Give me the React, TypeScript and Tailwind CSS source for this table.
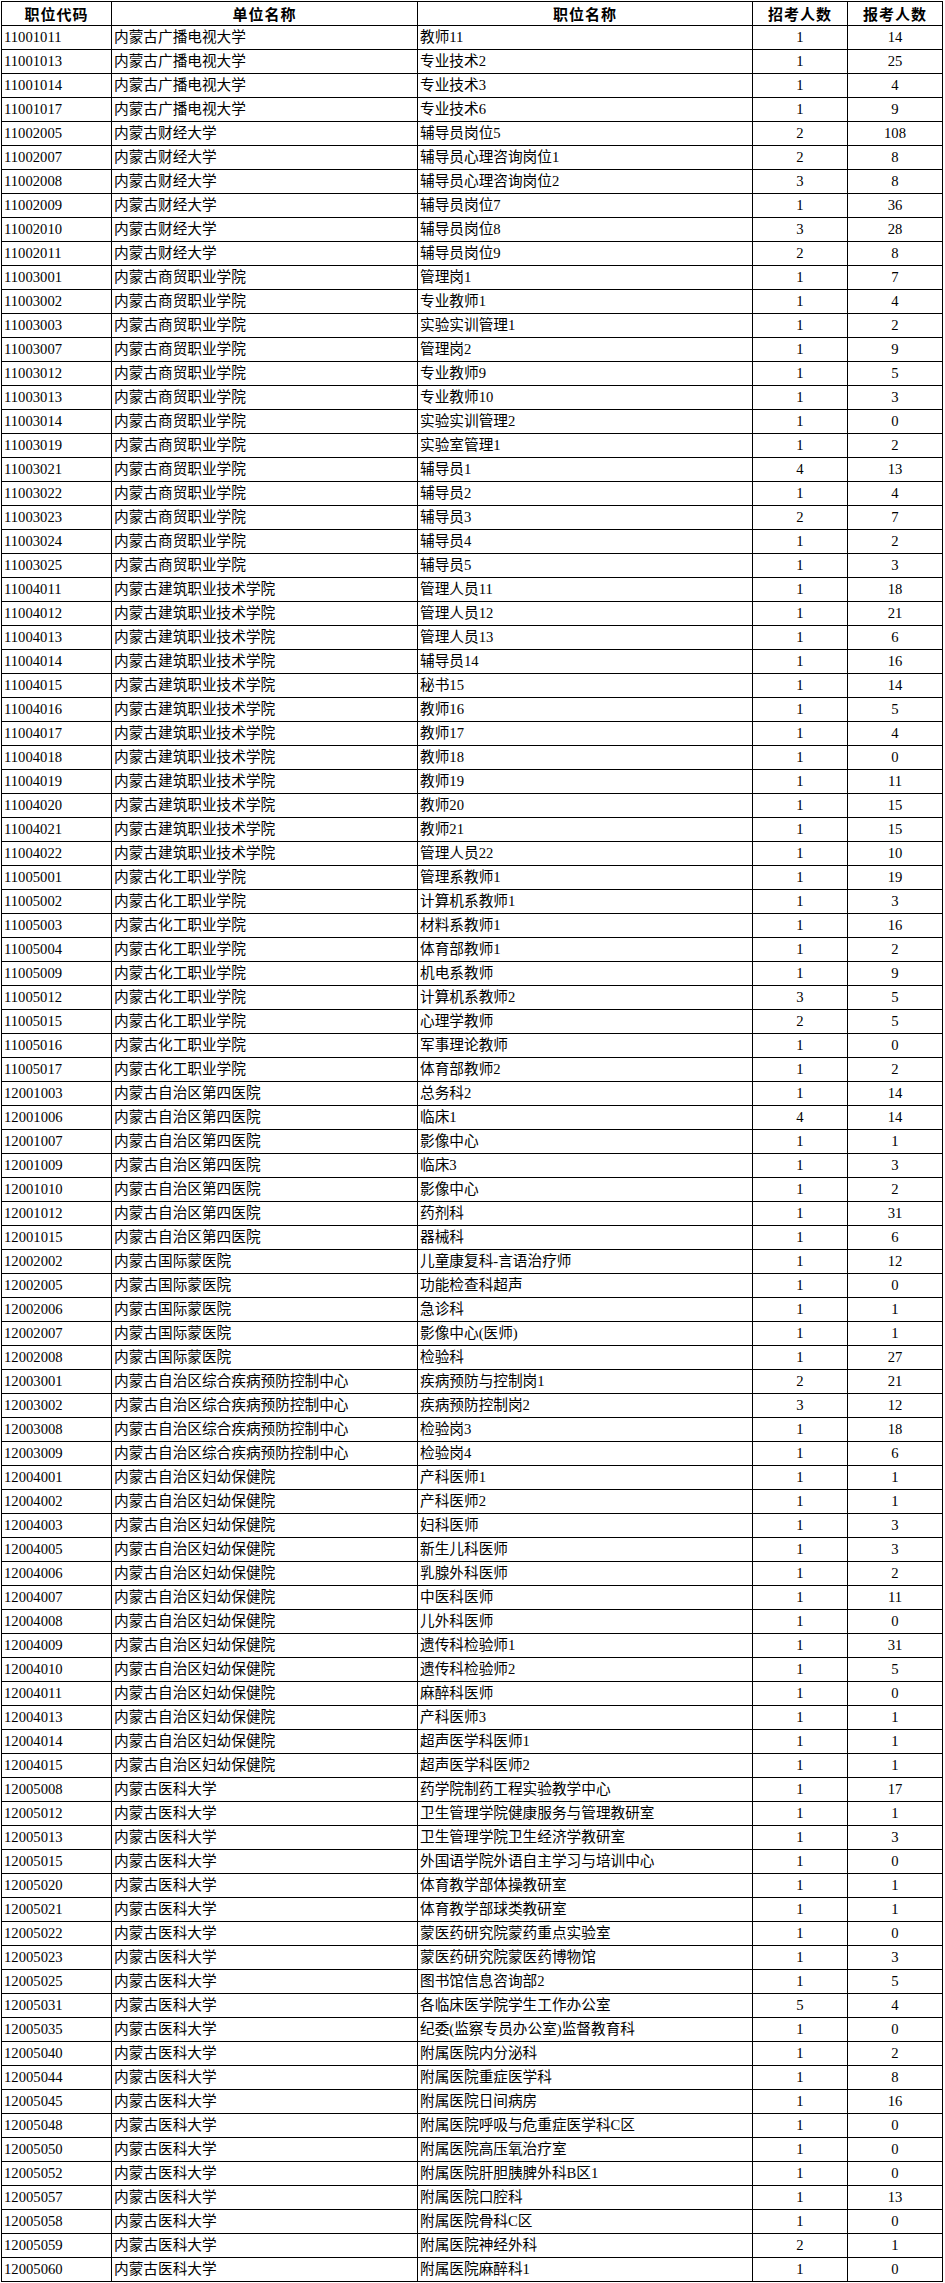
import React from "react";

const raw = `11001011|内蒙古广播电视大学|教师11|1|14
11001013|内蒙古广播电视大学|专业技术2|1|25
11001014|内蒙古广播电视大学|专业技术3|1|4
11001017|内蒙古广播电视大学|专业技术6|1|9
11002005|内蒙古财经大学|辅导员岗位5|2|108
11002007|内蒙古财经大学|辅导员心理咨询岗位1|2|8
11002008|内蒙古财经大学|辅导员心理咨询岗位2|3|8
11002009|内蒙古财经大学|辅导员岗位7|1|36
11002010|内蒙古财经大学|辅导员岗位8|3|28
11002011|内蒙古财经大学|辅导员岗位9|2|8
11003001|内蒙古商贸职业学院|管理岗1|1|7
11003002|内蒙古商贸职业学院|专业教师1|1|4
11003003|内蒙古商贸职业学院|实验实训管理1|1|2
11003007|内蒙古商贸职业学院|管理岗2|1|9
11003012|内蒙古商贸职业学院|专业教师9|1|5
11003013|内蒙古商贸职业学院|专业教师10|1|3
11003014|内蒙古商贸职业学院|实验实训管理2|1|0
11003019|内蒙古商贸职业学院|实验室管理1|1|2
11003021|内蒙古商贸职业学院|辅导员1|4|13
11003022|内蒙古商贸职业学院|辅导员2|1|4
11003023|内蒙古商贸职业学院|辅导员3|2|7
11003024|内蒙古商贸职业学院|辅导员4|1|2
11003025|内蒙古商贸职业学院|辅导员5|1|3
11004011|内蒙古建筑职业技术学院|管理人员11|1|18
11004012|内蒙古建筑职业技术学院|管理人员12|1|21
11004013|内蒙古建筑职业技术学院|管理人员13|1|6
11004014|内蒙古建筑职业技术学院|辅导员14|1|16
11004015|内蒙古建筑职业技术学院|秘书15|1|14
11004016|内蒙古建筑职业技术学院|教师16|1|5
11004017|内蒙古建筑职业技术学院|教师17|1|4
11004018|内蒙古建筑职业技术学院|教师18|1|0
11004019|内蒙古建筑职业技术学院|教师19|1|11
11004020|内蒙古建筑职业技术学院|教师20|1|15
11004021|内蒙古建筑职业技术学院|教师21|1|15
11004022|内蒙古建筑职业技术学院|管理人员22|1|10
11005001|内蒙古化工职业学院|管理系教师1|1|19
11005002|内蒙古化工职业学院|计算机系教师1|1|3
11005003|内蒙古化工职业学院|材料系教师1|1|16
11005004|内蒙古化工职业学院|体育部教师1|1|2
11005009|内蒙古化工职业学院|机电系教师|1|9
11005012|内蒙古化工职业学院|计算机系教师2|3|5
11005015|内蒙古化工职业学院|心理学教师|2|5
11005016|内蒙古化工职业学院|军事理论教师|1|0
11005017|内蒙古化工职业学院|体育部教师2|1|2
12001003|内蒙古自治区第四医院|总务科2|1|14
12001006|内蒙古自治区第四医院|临床1|4|14
12001007|内蒙古自治区第四医院|影像中心|1|1
12001009|内蒙古自治区第四医院|临床3|1|3
12001010|内蒙古自治区第四医院|影像中心|1|2
12001012|内蒙古自治区第四医院|药剂科|1|31
12001015|内蒙古自治区第四医院|器械科|1|6
12002002|内蒙古国际蒙医院|儿童康复科-言语治疗师|1|12
12002005|内蒙古国际蒙医院|功能检查科超声|1|0
12002006|内蒙古国际蒙医院|急诊科|1|1
12002007|内蒙古国际蒙医院|影像中心(医师)|1|1
12002008|内蒙古国际蒙医院|检验科|1|27
12003001|内蒙古自治区综合疾病预防控制中心|疾病预防与控制岗1|2|21
12003002|内蒙古自治区综合疾病预防控制中心|疾病预防控制岗2|3|12
12003008|内蒙古自治区综合疾病预防控制中心|检验岗3|1|18
12003009|内蒙古自治区综合疾病预防控制中心|检验岗4|1|6
12004001|内蒙古自治区妇幼保健院|产科医师1|1|1
12004002|内蒙古自治区妇幼保健院|产科医师2|1|1
12004003|内蒙古自治区妇幼保健院|妇科医师|1|3
12004005|内蒙古自治区妇幼保健院|新生儿科医师|1|3
12004006|内蒙古自治区妇幼保健院|乳腺外科医师|1|2
12004007|内蒙古自治区妇幼保健院|中医科医师|1|11
12004008|内蒙古自治区妇幼保健院|儿外科医师|1|0
12004009|内蒙古自治区妇幼保健院|遗传科检验师1|1|31
12004010|内蒙古自治区妇幼保健院|遗传科检验师2|1|5
12004011|内蒙古自治区妇幼保健院|麻醉科医师|1|0
12004013|内蒙古自治区妇幼保健院|产科医师3|1|1
12004014|内蒙古自治区妇幼保健院|超声医学科医师1|1|1
12004015|内蒙古自治区妇幼保健院|超声医学科医师2|1|1
12005008|内蒙古医科大学|药学院制药工程实验教学中心|1|17
12005012|内蒙古医科大学|卫生管理学院健康服务与管理教研室|1|1
12005013|内蒙古医科大学|卫生管理学院卫生经济学教研室|1|3
12005015|内蒙古医科大学|外国语学院外语自主学习与培训中心|1|0
12005020|内蒙古医科大学|体育教学部体操教研室|1|1
12005021|内蒙古医科大学|体育教学部球类教研室|1|1
12005022|内蒙古医科大学|蒙医药研究院蒙药重点实验室|1|0
12005023|内蒙古医科大学|蒙医药研究院蒙医药博物馆|1|3
12005025|内蒙古医科大学|图书馆信息咨询部2|1|5
12005031|内蒙古医科大学|各临床医学院学生工作办公室|5|4
12005035|内蒙古医科大学|纪委(监察专员办公室)监督教育科|1|0
12005040|内蒙古医科大学|附属医院内分泌科|1|2
12005044|内蒙古医科大学|附属医院重症医学科|1|8
12005045|内蒙古医科大学|附属医院日间病房|1|16
12005048|内蒙古医科大学|附属医院呼吸与危重症医学科C区|1|0
12005050|内蒙古医科大学|附属医院高压氧治疗室|1|0
12005052|内蒙古医科大学|附属医院肝胆胰脾外科B区1|1|0
12005057|内蒙古医科大学|附属医院口腔科|1|13
12005058|内蒙古医科大学|附属医院骨科C区|1|0
12005059|内蒙古医科大学|附属医院神经外科|2|1
12005060|内蒙古医科大学|附属医院麻醉科1|1|0`;

const rows = raw.split("\n").map((l) => l.split("|"));

export default function App() {
  return (
    <div className="bg-white w-[945px] pt-px pl-px text-black" style={{ fontFamily: '"Liberation Serif", "Noto Sans CJK SC", serif' }}>
      <table className="table-fixed border-collapse w-[941px] text-[14.67px] leading-none">
        <colgroup>
          <col className="w-[110px]" />
          <col className="w-[306px]" />
          <col className="w-[335px]" />
          <col className="w-[95px]" />
          <col className="w-[95px]" />
        </colgroup>
        <thead>
          <tr className="h-[24px]">
            {["职位代码", "单位名称", "职位名称", "招考人数", "报考人数"].map((h) => (
              <th key={h} className="border border-black p-0 text-center font-bold text-[15px] tracking-[1px] align-middle" style={{ fontFamily: '"Noto Sans CJK SC", sans-serif' }}>
                {h}
              </th>
            ))}
          </tr>
        </thead>
        <tbody>
          {rows.map((r) => (
            <tr key={r[0]} className="h-[24px]">
              <td className="border border-black p-0 pl-[2px] align-middle whitespace-nowrap">{r[0]}</td>
              <td className="border border-black p-0 pl-[2px] align-middle whitespace-nowrap">{r[1]}</td>
              <td className="border border-black p-0 pl-[2px] align-middle whitespace-nowrap">{r[2]}</td>
              <td className="border border-black p-0 text-center align-middle">{r[3]}</td>
              <td className="border border-black p-0 text-center align-middle">{r[4]}</td>
            </tr>
          ))}
        </tbody>
      </table>
    </div>
  );
}
